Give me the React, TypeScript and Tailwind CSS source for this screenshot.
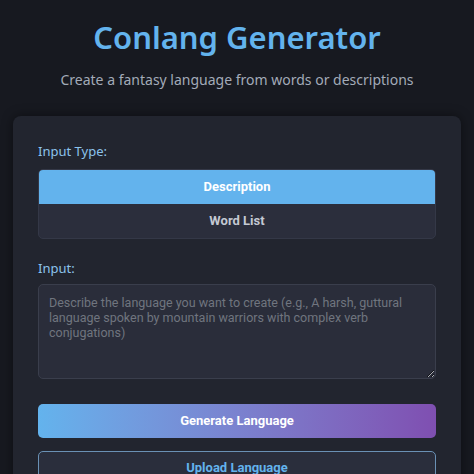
import React, { useState } from 'react'

const App: React.FC = () => {
	const [inputType, setInputType] = useState<'description' | 'words'>('description')
	const [input, setInput] = useState('')

	return (
		<div className="min-h-screen bg-[#171920] px-[13px] pt-[16px]" style={{ fontFamily: '"Noto Sans", sans-serif' }}>
			<h1 className="text-center text-[31px] font-semibold leading-[42px] text-[#63b3ed]">Conlang Generator</h1>
			<p className="mt-[12px] text-center text-[14px] leading-[19px] text-[#a3abb8]">
				Create a fantasy language from words or descriptions
			</p>

			<div className="mt-[27px] rounded-[8px] bg-[#22252f] px-[25px] pt-[26px] pb-6 shadow-[0_0_12px_rgba(0,0,0,0.45)]">
				<label className="block text-[13px] leading-[18px] text-[#8cc3ec]">Input Type:</label>
				<div
					className="mt-[9px] overflow-hidden rounded-[5px] border border-[#343847] bg-[#2b2e3c] text-[13px] font-bold"
					style={{ fontFamily: 'Roboto, sans-serif' }}
				>
					<button
						onClick={() => setInputType('description')}
						className={`block h-[34px] w-full ${inputType === 'description' ? 'bg-[#63b3ed] text-white' : 'text-[#c4c9d3]'}`}
					>
						Description
					</button>
					<button
						onClick={() => setInputType('words')}
						className={`block h-[34px] w-full ${inputType === 'words' ? 'bg-[#63b3ed] text-white' : 'text-[#c4c9d3]'}`}
					>
						Word List
					</button>
				</div>

				<label className="mt-[20px] block text-[13px] leading-[18px] text-[#8cc3ec]">Input:</label>
				<textarea
					value={input}
					onChange={(e) => setInput(e.target.value)}
					placeholder="Describe the language you want to create (e.g., A harsh, guttural language spoken by mountain warriors with complex verb conjugations)"
					className="mt-[7px] block h-[95px] w-full rounded-[5px] border border-[#3a3e4c] bg-[#2a2d3a] px-[10px] py-[10px] text-[12.5px] leading-[15px] text-[#d0d4dc] placeholder:text-[#70757f] outline-none"
					style={{ fontFamily: 'Roboto, sans-serif' }}
				/>

				<div className="mt-[25px] flex flex-col gap-[13px]" style={{ fontFamily: 'Roboto, sans-serif' }}>
					<button className="h-[34px] w-full rounded-[5px] bg-gradient-to-r from-[#63b3ed] to-[#7f4fb1] text-[13px] font-bold text-white">
						Generate Language
					</button>
					<button className="h-[34px] w-full rounded-[5px] border border-[#6a91b5] bg-[#2a2e3c] text-[13px] font-bold text-[#63b3ed]">
						Upload Language
					</button>
				</div>
			</div>
		</div>
	)
}

export default App
